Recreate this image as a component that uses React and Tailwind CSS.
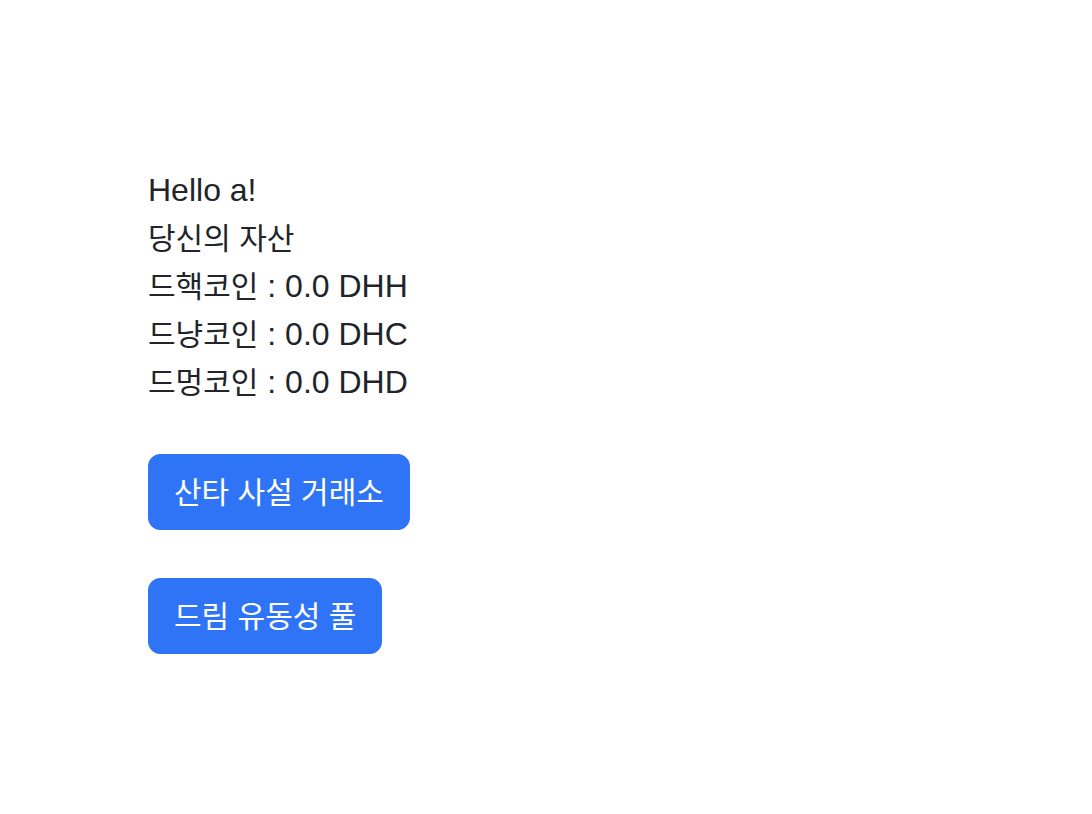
export default function App() {
  const ko = "text-[30px] leading-none"
  const coins = [
    { name: "드핵코인", symbol: "DHH" },
    { name: "드냥코인", symbol: "DHC" },
    { name: "드멍코인", symbol: "DHD" },
  ]

  return (
    <div
      className="min-h-screen bg-white pt-[166px] pl-[148px] text-[32px] leading-[48px] text-[#212529]"
      style={{ fontFamily: '"Liberation Sans", "Noto Sans CJK KR", sans-serif' }}
    >
      <div className="h-12">Hello a!</div>
      <div className="h-12">
        <span className={ko}>당신의 자산</span>
      </div>
      {coins.map((c) => (
        <div key={c.symbol} className="h-12">
          <span className={ko}>{c.name}</span> : 0.0 {c.symbol}
        </div>
      ))}

      <div className="mt-12">
        <button className="h-[76px] rounded-[12px] border border-[#2f74f6] bg-[#2f74f6] px-[25px] leading-[48px] text-white">
          <span className={ko}>산타 사설 거래소</span>
        </button>
      </div>
      <div className="mt-12">
        <button className="h-[76px] rounded-[12px] border border-[#2f74f6] bg-[#2f74f6] px-[25px] leading-[48px] text-white">
          <span className={ko}>드림 유동성 풀</span>
        </button>
      </div>
    </div>
  )
}
